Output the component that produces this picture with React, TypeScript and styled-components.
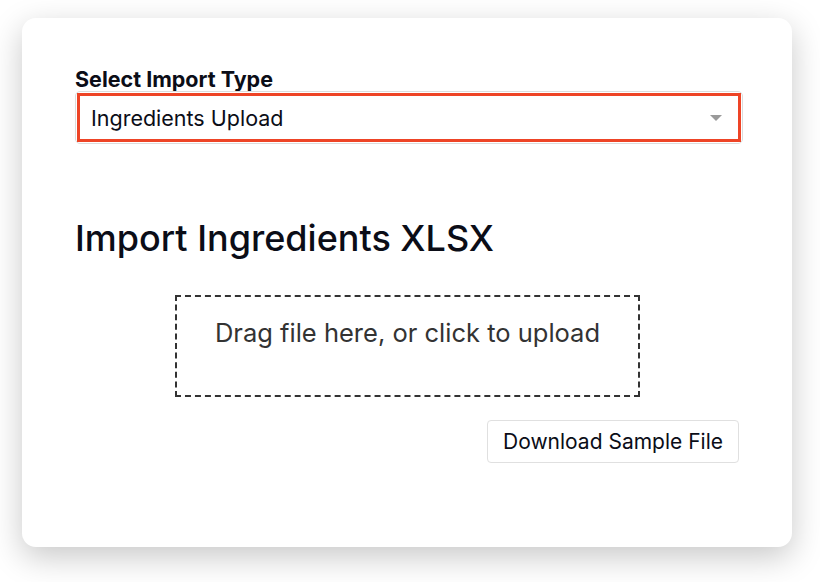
import styled, { createGlobalStyle } from "styled-components";
import { useState } from "react";

const GlobalStyle = createGlobalStyle`
  html, body {
    margin: 0;
    padding: 0;
    background: #ffffff;
    font-family: Inter, "Noto Sans", sans-serif;
    color: #0b0d17;
  }
  * {
    box-sizing: border-box;
  }
`;

const Page = styled.div`
  width: 820px;
  height: 582px;
  padding: 18px 28px 35px 22px;
  background: #ffffff;
`;

const Card = styled.div`
  height: 529px;
  background: #ffffff;
  border-radius: 14px;
  box-shadow: 0 10px 32px rgba(0, 0, 0, 0.22);
  padding: 49px 51px 0 53px;
`;

const Label = styled.label`
  display: block;
  font-size: 21.5px;
  font-weight: 700;
  line-height: 24px;
`;

const SelectWrap = styled.div`
  position: relative;
  margin-right: -2px;

  /* focus ring drawn square over the rounded select */
  &::after {
    content: "";
    position: absolute;
    inset: 2px;
    border: 3px solid #ee4426;
    pointer-events: none;
  }
`;

const Select = styled.select`
  appearance: none;
  display: block;
  width: 100%;
  height: 53px;
  padding: 1px 40px 0 15px;
  font-family: inherit;
  font-size: 21.5px;
  color: #0b0d17;
  background: #ffffff;
  border: 1px solid #dcdcdc;
  border-radius: 5px;
  outline: none;
`;

const Caret = styled.span`
  position: absolute;
  right: 21px;
  top: 24px;
  width: 0;
  height: 0;
  border-left: 6.5px solid transparent;
  border-right: 6.5px solid transparent;
  border-top: 6.5px solid #9a9a9a;
  pointer-events: none;
`;

const Heading = styled.h2`
  margin: 72px 0 0;
  font-size: 36px;
  font-weight: 500;
  line-height: 44px;
`;

const DropZone = styled.div`
  width: 465px;
  height: 102px;
  margin: 35px 0 0 100px;
  border: 2px dashed #333333;
  display: flex;
  justify-content: center;
  padding-top: 20px;
  font-size: 25.5px;
  color: #333333;
  cursor: pointer;
`;

const Actions = styled.div`
  display: flex;
  justify-content: flex-end;
  margin-top: 23px;
  margin-right: 2px;
`;

const Button = styled.button`
  height: 43px;
  padding: 0 15px;
  font-family: inherit;
  font-size: 21px;
  color: #0b0d17;
  background: #ffffff;
  border: 1px solid #e0e0e0;
  border-radius: 4px;
  cursor: pointer;
`;

export default function App() {
  const [type, setType] = useState("ingredients");

  return (
    <>
      <GlobalStyle />
      <Page>
        <Card>
          <Label htmlFor="import-type">Select Import Type</Label>
          <SelectWrap>
            <Select
              id="import-type"
              value={type}
              onChange={(e) => setType(e.target.value)}
            >
              <option value="ingredients">Ingredients Upload</option>
              <option value="recipes">Recipes Upload</option>
            </Select>
            <Caret />
          </SelectWrap>
          <Heading>Import Ingredients XLSX</Heading>
          <DropZone>Drag file here, or click to upload</DropZone>
          <Actions>
            <Button>Download Sample File</Button>
          </Actions>
        </Card>
      </Page>
    </>
  );
}
